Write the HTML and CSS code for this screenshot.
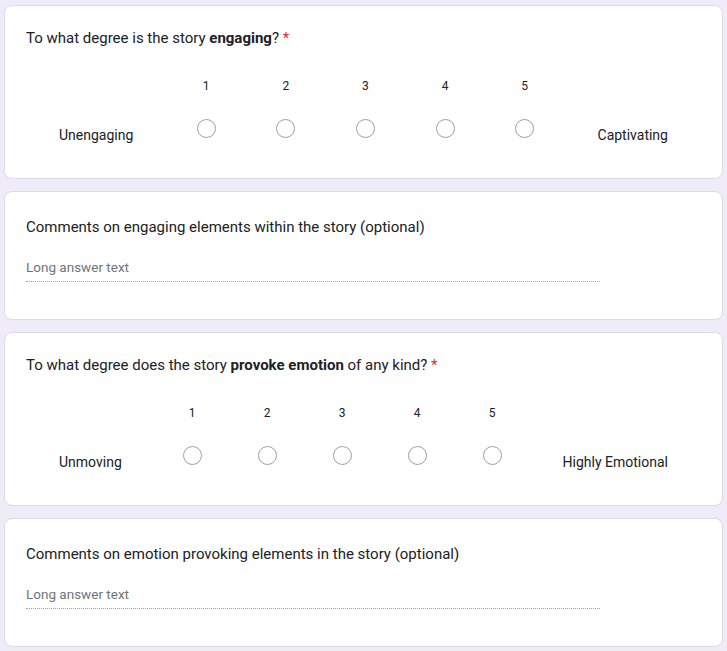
FILE: index.html
```html
<!DOCTYPE html>
<html lang="en">
<head>
<meta charset="utf-8">
<link rel="stylesheet" href="styles.css">
</head>
<body>
<main class="form">
  <section class="card card-scale">
    <div class="title">To what degree is the story <b>engaging</b>? <span class="req">*</span></div>
    <div class="scale">
      <div class="end-label">Unengaging</div>
      <div class="opt"><span class="num">1</span><span class="radio"></span></div>
      <div class="opt"><span class="num">2</span><span class="radio"></span></div>
      <div class="opt"><span class="num">3</span><span class="radio"></span></div>
      <div class="opt"><span class="num">4</span><span class="radio"></span></div>
      <div class="opt"><span class="num">5</span><span class="radio"></span></div>
      <div class="end-label">Captivating</div>
    </div>
  </section>
  <section class="card card-text">
    <div class="title">Comments on engaging elements within the story (optional)</div>
    <div class="answer">Long answer text</div>
  </section>
  <section class="card card-scale">
    <div class="title">To what degree does the story <b>provoke emotion</b> of any kind? <span class="req">*</span></div>
    <div class="scale">
      <div class="end-label">Unmoving</div>
      <div class="opt"><span class="num">1</span><span class="radio"></span></div>
      <div class="opt"><span class="num">2</span><span class="radio"></span></div>
      <div class="opt"><span class="num">3</span><span class="radio"></span></div>
      <div class="opt"><span class="num">4</span><span class="radio"></span></div>
      <div class="opt"><span class="num">5</span><span class="radio"></span></div>
      <div class="end-label">Highly Emotional</div>
    </div>
  </section>
  <section class="card card-text">
    <div class="title">Comments on emotion provoking elements in the story (optional)</div>
    <div class="answer">Long answer text</div>
  </section>
</main>
</body>
</html>
```
FILE: styles.css
```css
html, body {
  margin: 0;
  padding: 0;
  background: #f0ebf8;
}
body {
  font-family: Roboto, "Liberation Sans", Arial, sans-serif;
  color: #202124;
}
.form {
  display: flex;
  flex-direction: column;
  gap: 12px;
  padding: 5px 4px 0 4px;
}
.card {
  background: #ffffff;
  border: 1px solid #dadce0;
  border-radius: 8px;
  padding: 21px 21px 0 21px;
  box-sizing: border-box;
}
.card-scale {
  height: 174px;
}
.card-text {
  height: 129px;
  padding-top: 24px;
}
.title {
  font-size: 15px;
  line-height: 22px;
}
.title b {
  font-weight: 700;
}
.req {
  color: #d93025;
}
.scale {
  display: flex;
  align-items: flex-end;
  margin-top: 27px;
}
.end-label {
  font-size: 14px;
  line-height: 20px;
  padding: 0 33px;
  white-space: nowrap;
}
.opt {
  flex: 1;
  display: flex;
  flex-direction: column;
  align-items: center;
}
.num {
  font-size: 12px;
  line-height: 20px;
  margin-bottom: 23px;
}
.radio {
  width: 17px;
  height: 17px;
  border: 1.5px solid #9aa0a6;
  border-radius: 50%;
  margin-bottom: 7px;
}
.answer {
  width: 574px;
  margin-top: 19px;
  font-size: 13.5px;
  line-height: 20px;
  color: #70757a;
  padding-bottom: 4px;
  border-bottom: 1px dotted #9aa0a6;
}
```
